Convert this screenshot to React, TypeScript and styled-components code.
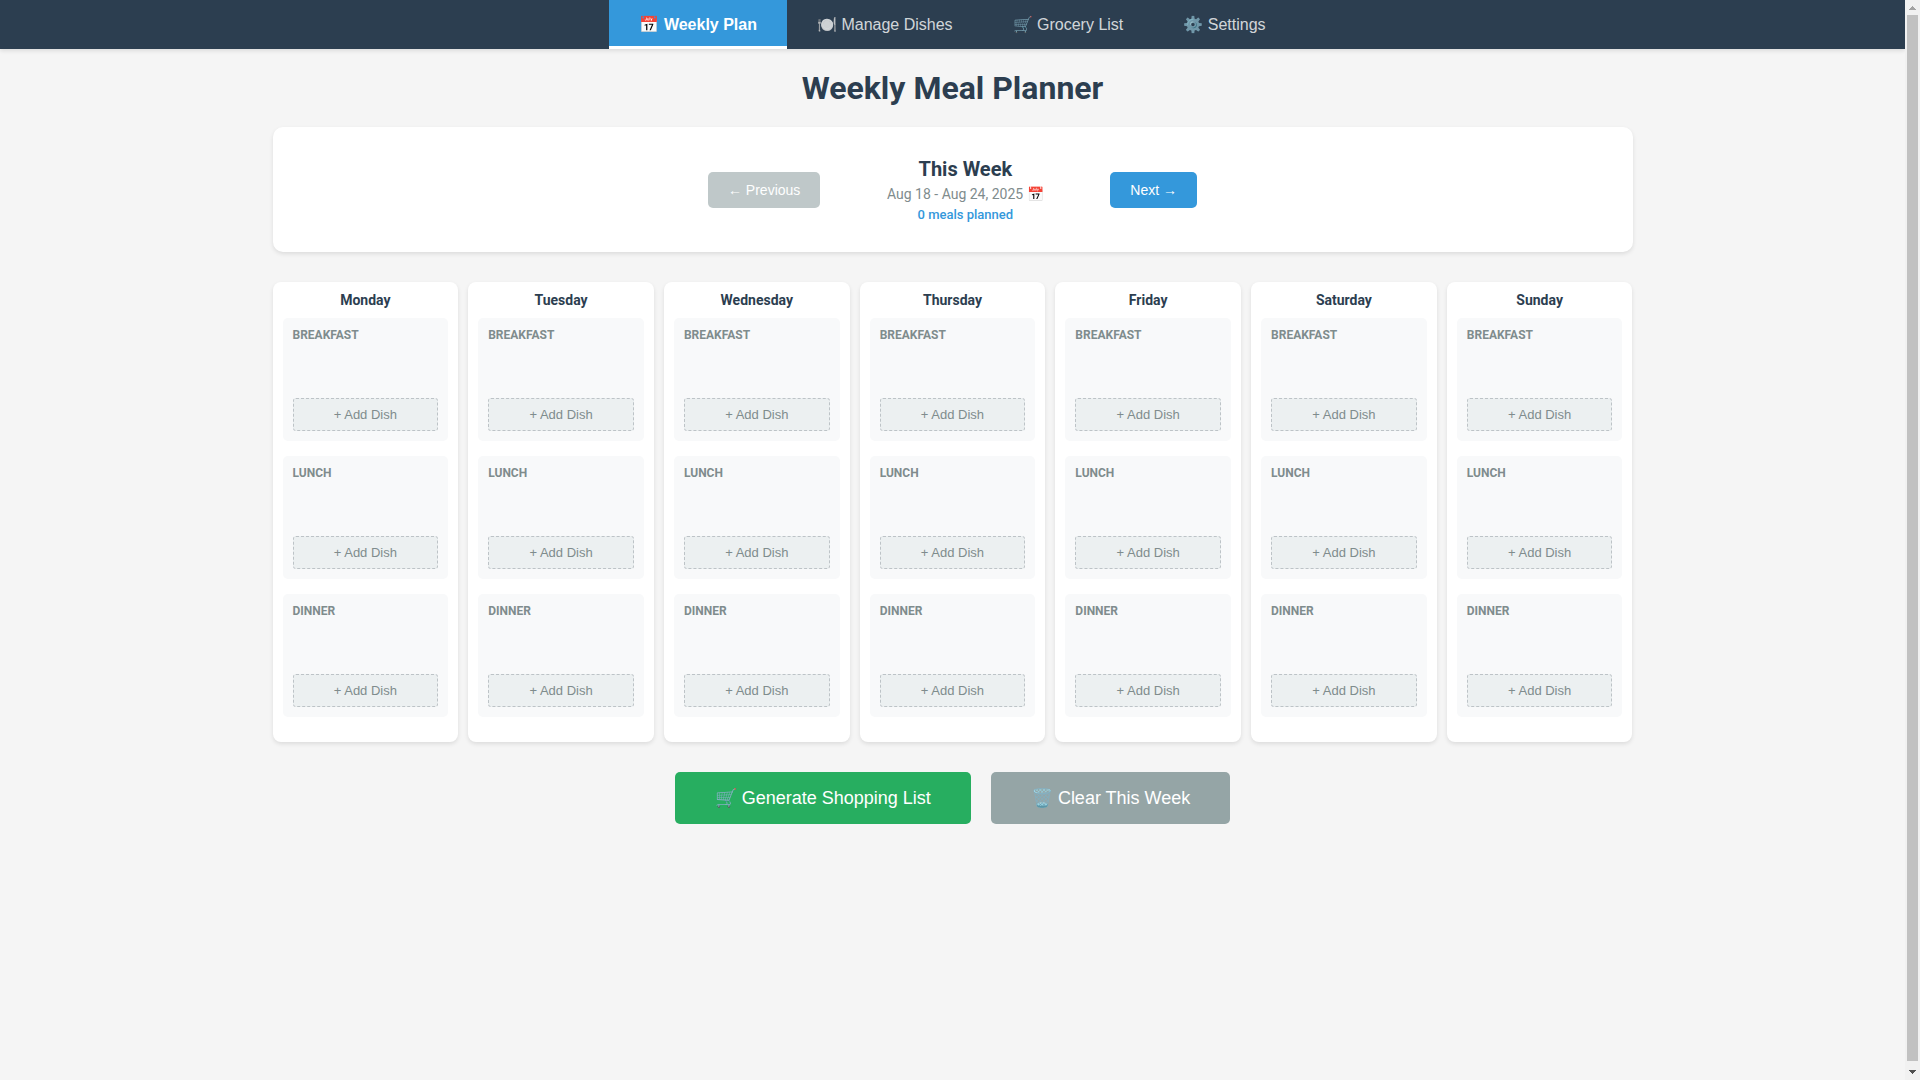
import React, { useState } from "react";
import styled, { createGlobalStyle } from "styled-components";

const GlobalStyle = createGlobalStyle`
  * { box-sizing: border-box; }
  body {
    margin: 0;
    background: #f5f5f5;
    color: #2c3e50;
    font-family: Roboto, "Liberation Sans", sans-serif;
  }
  button { font-family: "Liberation Sans", Arial, sans-serif; }
`;

const Shell = styled.div`
  display: flex;
  height: 100vh;
`;

const Page = styled.div`
  flex: 1;
  min-width: 0;
  overflow-y: auto;
  scrollbar-width: none;
`;

const ScrollTrack = styled.div`
  display: flex;
  flex-direction: column;
  align-items: center;
  width: 15px;
  background: #f1f1f1;
`;

const ScrollArrow = styled.svg`
  flex: none;
  width: 15px;
  height: 15px;
`;

const ScrollThumb = styled.div`
  flex: 1;
  width: 11px;
  margin-bottom: 4px;
  background: #c1c1c1;
`;

const NavBar = styled.nav`
  display: flex;
  justify-content: center;
  background: #2c3e50;
  box-shadow: 0 2px 4px rgba(0, 0, 0, 0.1);
`;

const NavTab = styled.button<{ $active: boolean }>`
  padding: 15px 30px;
  border: none;
  background: ${(p) => (p.$active ? "#3498db" : "transparent")};
  box-shadow: ${(p) => (p.$active ? "inset 0 -3px 0 #fff" : "none")};
  color: ${(p) => (p.$active ? "#fff" : "rgba(255, 255, 255, 0.8)")};
  font-size: 16px;
  font-weight: ${(p) => (p.$active ? "bold" : "normal")};
  line-height: 19px;
  cursor: pointer;
`;

const Container = styled.main`
  max-width: 1400px;
  margin: 0 auto;
  padding: 20px;
`;

const Title = styled.h1`
  margin: 0 0 20px;
  font-size: 32px;
  line-height: 38px;
  text-align: center;
`;

const WeekNav = styled.section`
  display: flex;
  justify-content: center;
  align-items: center;
  gap: 20px;
  margin-bottom: 30px;
  padding: 30px;
  background: #fff;
  border-radius: 10px;
  box-shadow: 0 2px 4px rgba(0, 0, 0, 0.1);
`;

const WeekButton = styled.button`
  padding: 10px 20px;
  border: none;
  border-radius: 5px;
  background: #3498db;
  color: #fff;
  font-size: 14px;
  line-height: 16px;
  cursor: pointer;

  &:disabled {
    background: #95a5a6;
    opacity: 0.6;
    cursor: not-allowed;
  }
`;

const WeekInfo = styled.div`
  min-width: 250px;
  text-align: center;
`;

const WeekName = styled.h2`
  margin: 0;
  font-size: 20px;
  line-height: 24px;
`;

const WeekDates = styled.div`
  margin-top: 5px;
  color: #7f8c8d;
  font-size: 14px;
  line-height: 16px;
`;

const MealCount = styled.div`
  margin-top: 5px;
  color: #3498db;
  font-size: 13px;
  font-weight: 500;
  line-height: 15px;
`;

const WeekGrid = styled.div`
  display: grid;
  grid-template-columns: repeat(7, 1fr);
  gap: 10px;
  margin-bottom: 30px;
`;

const DayCard = styled.section`
  padding: 10px;
  background: #fff;
  border-radius: 8px;
  box-shadow: 0 2px 4px rgba(0, 0, 0, 0.1);
`;

const DayName = styled.h3`
  margin: 0 0 10px;
  font-size: 14px;
  line-height: 16px;
  text-align: center;
`;

const MealSlot = styled.div`
  margin-bottom: 15px;
  padding: 10px;
  background: #f8f9fa;
  border-radius: 5px;
`;

const MealLabel = styled.h4`
  margin: 0;
  color: #7f8c8d;
  font-size: 12px;
  line-height: 14px;
  text-transform: uppercase;
`;

const DishList = styled.div`
  min-height: 56px;
`;

const AddButton = styled.button`
  display: block;
  width: 100%;
  padding: 8px;
  border: 1px dashed #bdc3c7;
  border-radius: 3px;
  background: #ecf0f1;
  color: #7f8c8d;
  font-size: 13px;
  line-height: 15px;
  cursor: pointer;
`;

const Actions = styled.div`
  display: flex;
  justify-content: center;
  gap: 20px;
`;

const ActionButton = styled.button<{ $color: string }>`
  padding: 15px 40px;
  border: none;
  border-radius: 5px;
  background: ${(p) => p.$color};
  color: #fff;
  font-size: 18px;
  line-height: 22px;
  cursor: pointer;
`;

const tabs = ["📅 Weekly Plan", "🍽️ Manage Dishes", "🛒 Grocery List", "⚙️ Settings"];
const days = ["Monday", "Tuesday", "Wednesday", "Thursday", "Friday", "Saturday", "Sunday"];
const meals = ["Breakfast", "Lunch", "Dinner"];

export default function App() {
  const [active, setActive] = useState(0);

  return (
    <Shell>
      <GlobalStyle />
      <Page>
        <NavBar>
          {tabs.map((tab, i) => (
            <NavTab key={tab} $active={i === active} onClick={() => setActive(i)}>
              {tab}
            </NavTab>
          ))}
        </NavBar>
        <Container>
          <Title>Weekly Meal Planner</Title>
          <WeekNav>
            <WeekButton disabled>← Previous</WeekButton>
            <WeekInfo>
              <WeekName>This Week</WeekName>
              <WeekDates>Aug 18 - Aug 24, 2025 📅</WeekDates>
              <MealCount>0 meals planned</MealCount>
            </WeekInfo>
            <WeekButton>Next →</WeekButton>
          </WeekNav>
          <WeekGrid>
            {days.map((day) => (
              <DayCard key={day}>
                <DayName>{day}</DayName>
                {meals.map((meal) => (
                  <MealSlot key={meal}>
                    <MealLabel>{meal}</MealLabel>
                    <DishList />
                    <AddButton aria-label={`+ Add Dish, ${day} ${meal}`}>+ Add Dish</AddButton>
                  </MealSlot>
                ))}
              </DayCard>
            ))}
          </WeekGrid>
          <Actions>
            <ActionButton $color="#27ae60">🛒 Generate Shopping List</ActionButton>
            <ActionButton $color="#95a5a6">🗑️ Clear This Week</ActionButton>
          </Actions>
        </Container>
      </Page>
      <ScrollTrack aria-hidden="true">
        <ScrollArrow viewBox="0 0 15 15">
          <path d="M4 10h7v-1h-1v-1h-1v-1h-1v-1h-1v1h-1v1h-1v1h-1z" fill="#a3a3a3" />
        </ScrollArrow>
        <ScrollThumb />
        <ScrollArrow viewBox="0 0 15 15">
          <path d="M4 5h7v1h-1v1h-1v1h-1v1h-1v-1h-1v-1h-1v-1h-1z" fill="#505050" />
        </ScrollArrow>
      </ScrollTrack>
    </Shell>
  );
}
